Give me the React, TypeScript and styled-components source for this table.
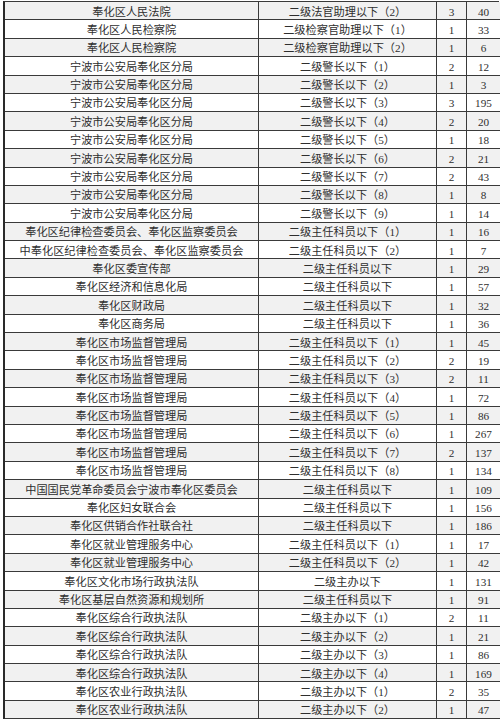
import React from "react";
import styled, { createGlobalStyle } from "styled-components";

const Global = createGlobalStyle`
  html, body { margin: 0; padding: 0; background: #ffffff; }
  body { font-family: "Liberation Serif", "Noto Sans CJK SC", serif; }
`;

type Row = [string, string, string, string];

const rows: Row[] = [
  ["奉化区人民法院", "二级法官助理以下（2）", "3", "40"],
  ["奉化区人民检察院", "二级检察官助理以下（1）", "1", "33"],
  ["奉化区人民检察院", "二级检察官助理以下（2）", "1", "6"],
  ["宁波市公安局奉化区分局", "二级警长以下（1）", "2", "12"],
  ["宁波市公安局奉化区分局", "二级警长以下（2）", "1", "3"],
  ["宁波市公安局奉化区分局", "二级警长以下（3）", "3", "195"],
  ["宁波市公安局奉化区分局", "二级警长以下（4）", "2", "20"],
  ["宁波市公安局奉化区分局", "二级警长以下（5）", "1", "18"],
  ["宁波市公安局奉化区分局", "二级警长以下（6）", "2", "21"],
  ["宁波市公安局奉化区分局", "二级警长以下（7）", "2", "43"],
  ["宁波市公安局奉化区分局", "二级警长以下（8）", "1", "8"],
  ["宁波市公安局奉化区分局", "二级警长以下（9）", "1", "14"],
  ["奉化区纪律检查委员会、奉化区监察委员会", "二级主任科员以下（1）", "1", "16"],
  ["中奉化区纪律检查委员会、奉化区监察委员会", "二级主任科员以下（2）", "1", "7"],
  ["奉化区委宣传部", "二级主任科员以下", "1", "29"],
  ["奉化区经济和信息化局", "二级主任科员以下", "1", "57"],
  ["奉化区财政局", "二级主任科员以下", "1", "32"],
  ["奉化区商务局", "二级主任科员以下", "1", "36"],
  ["奉化区市场监督管理局", "二级主任科员以下（1）", "1", "45"],
  ["奉化区市场监督管理局", "二级主任科员以下（2）", "2", "19"],
  ["奉化区市场监督管理局", "二级主任科员以下（3）", "2", "11"],
  ["奉化区市场监督管理局", "二级主任科员以下（4）", "1", "72"],
  ["奉化区市场监督管理局", "二级主任科员以下（5）", "1", "86"],
  ["奉化区市场监督管理局", "二级主任科员以下（6）", "1", "267"],
  ["奉化区市场监督管理局", "二级主任科员以下（7）", "2", "137"],
  ["奉化区市场监督管理局", "二级主任科员以下（8）", "1", "134"],
  ["中国国民党革命委员会宁波市奉化区委员会", "二级主任科员以下", "1", "109"],
  ["奉化区妇女联合会", "二级主任科员以下", "1", "156"],
  ["奉化区供销合作社联合社", "二级主任科员以下", "1", "186"],
  ["奉化区就业管理服务中心", "二级主任科员以下（1）", "1", "17"],
  ["奉化区就业管理服务中心", "二级主任科员以下（2）", "1", "42"],
  ["奉化区文化市场行政执法队", "二级主办以下", "1", "131"],
  ["奉化区基层自然资源和规划所", "二级主任科员以下", "1", "91"],
  ["奉化区综合行政执法队", "二级主办以下（1）", "2", "11"],
  ["奉化区综合行政执法队", "二级主办以下（2）", "1", "21"],
  ["奉化区综合行政执法队", "二级主办以下（3）", "1", "86"],
  ["奉化区综合行政执法队", "二级主办以下（4）", "1", "169"],
  ["奉化区农业行政执法队", "二级主办以下（1）", "2", "35"],
  ["奉化区农业行政执法队", "二级主办以下（2）", "1", "47"],
];

const Sheet = styled.div`
  margin: 1px 0 0 3px;
  width: 496px;
  display: grid;
  grid-template-columns: 254px 178px 30px 34px;
  grid-auto-rows: 18.4px;
  border-top: 1px solid #3a3a3a;
  border-left: 2px solid #2a2a2a;
  box-sizing: border-box;
`;

const Cell = styled.div<{ $shade: boolean }>`
  box-sizing: border-box;
  border-right: 1px solid #3a3a3a;
  border-bottom: 1px solid #3a3a3a;
  background: ${(p) => (p.$shade ? "#f1f1f1" : "#ffffff")};
  color: #2e2e2e;
  font-size: 11.2px;
  line-height: 17px;
  padding-top: 1.5px;
  text-align: center;
  white-space: nowrap;
  overflow: hidden;
`;

export default function App() {
  return (
    <>
      <Global />
      <Sheet>
        {rows.map((r, i) =>
          r.map((c, j) => (
            <Cell key={`${i}-${j}`} $shade={i % 2 === 0}>
              {c}
            </Cell>
          ))
        )}
      </Sheet>
    </>
  );
}
